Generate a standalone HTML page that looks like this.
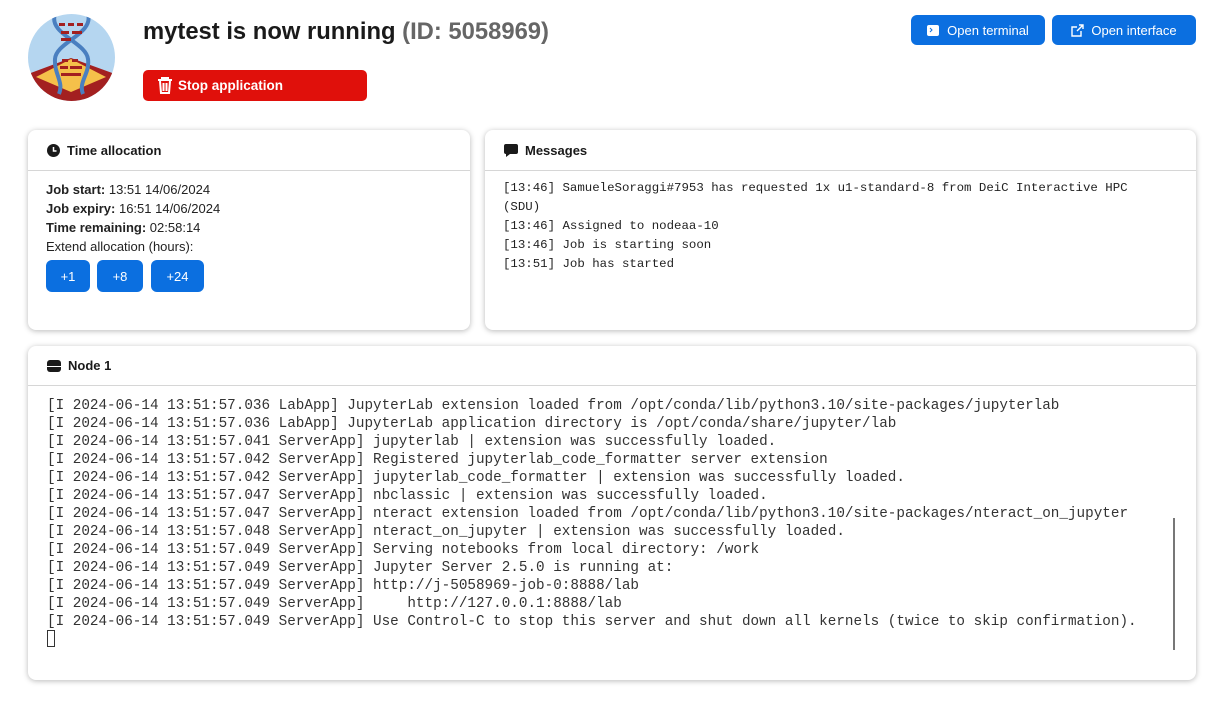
<!DOCTYPE html>
<html><head><meta charset="utf-8"><style>
*{box-sizing:border-box;margin:0;padding:0}
body{width:1221px;height:712px;background:#fff;font-family:"Liberation Sans",sans-serif;color:#222;position:relative;overflow:hidden}
.abs{position:absolute}
.card{position:absolute;background:#fff;border-radius:8px;box-shadow:0 1px 6px rgba(0,0,0,.28)}
.ch{height:41px;border-bottom:1px solid #d6d6d6;display:flex;align-items:center;padding-left:19px;font-weight:bold;font-size:13px;color:#1a1a1a}
.ch svg{margin-right:7px}
.btn{position:absolute;background:#0b6fe0;color:#fff;border-radius:6px;font-size:13px;display:flex;align-items:center;justify-content:center}
.mono{font-family:"Liberation Mono",monospace}
</style></head><body>
<svg class="abs" style="left:28px;top:14px" width="87" height="87" viewBox="0 0 87 87">
<defs><clipPath id="c"><circle cx="43.5" cy="43.5" r="43.5"/></clipPath></defs>
<g clip-path="url(#c)">
<rect width="87" height="87" fill="#b5d6f0"/>
<polygon points="0,60 43,44 87,60 87,87 0,87" fill="#a32020"/>
<polygon points="8,63 43,45 78,63 43,78" fill="#f5c04a"/>
<path d="M27,0 C20,20 58,28 60,45 C62,60 50,68 55,80" stroke="#4a7fc0" stroke-width="4" fill="none"/>
<path d="M60,0 C66,20 28,28 27,45 C26,60 36,68 31,80" stroke="#4a7fc0" stroke-width="4" fill="none"/>
<g fill="#a32020"><rect x="31" y="9" width="6" height="3"/><rect x="40" y="9" width="6" height="3"/><rect x="49" y="9" width="6" height="3"/>
<rect x="33" y="17" width="8" height="3"/><rect x="44" y="17" width="10" height="3"/><rect x="33" y="24" width="10" height="3"/>
<rect x="34" y="45" width="6" height="3"/><rect x="44" y="45" width="6" height="3"/><rect x="32" y="52" width="8" height="3"/><rect x="42" y="52" width="12" height="3"/><rect x="33" y="59" width="20" height="3"/></g>
</g></svg>
<div class="abs" style="left:143px;top:18px;font-size:23.8px;font-weight:bold;color:#1a1a1a">mytest is now running <span style="color:#666">(ID: 5058969)</span></div>
<div class="abs" style="left:143px;top:70px;width:224px;height:31px;background:#e0100b;border-radius:5px;color:#fff;font-weight:bold;font-size:13.5px;display:flex;align-items:center;padding-left:14px">
<svg width="16" height="17" viewBox="0 0 16 17" style="margin-right:5px"><path d="M1 3h14M5 3V1h6v2M3 4l1 12h8l1-12M6.5 6v8M9.5 6v8" stroke="#fff" stroke-width="2" fill="none"/></svg>Stop application</div>
<div class="btn" style="left:911px;top:15px;width:134px;height:30px"><svg width="12" height="11" style="margin-right:8px"><rect width="12" height="11" rx="2" fill="#fff"/><path d="M3 3l2 2-2 2" stroke="#0b6fe0" fill="none"/></svg>Open terminal</div>
<div class="btn" style="left:1052px;top:15px;width:144px;height:30px"><svg width="13" height="13" style="margin-right:7px" viewBox="0 0 13 13"><path d="M10 7v5H1V3h5M8 1h4v4M12 1L6 7" stroke="#fff" stroke-width="1.4" fill="none"/></svg>Open interface</div>

<div class="card" style="left:28px;top:130px;width:442px;height:200px">
<div class="ch"><svg width="13" height="13"><circle cx="6.5" cy="6.5" r="6.5" fill="#1a1a1a"/><path d="M6.5 3v4h3" stroke="#fff" stroke-width="1.5" fill="none"/></svg>Time allocation</div>
<div style="padding:9px 0 0 18px;font-size:13px;line-height:19px">
<div><b>Job start:</b> 13:51 14/06/2024</div><div><b>Job expiry:</b> 16:51 14/06/2024</div><div><b>Time remaining:</b> 02:58:14</div><div>Extend allocation (hours):</div></div>
<div class="btn" style="left:18px;top:130px;width:44px;height:32px">+1</div>
<div class="btn" style="left:69px;top:130px;width:46px;height:32px">+8</div>
<div class="btn" style="left:123px;top:130px;width:53px;height:32px">+24</div>
</div>

<div class="card" style="left:485px;top:130px;width:711px;height:200px">
<div class="ch"><svg width="14" height="13"><path d="M2 0h10a2 2 0 012 2v6a2 2 0 01-2 2H6l-4 3v-3a2 2 0 01-2-2V2a2 2 0 012-2z" fill="#1a1a1a"/></svg>Messages</div>
<div class="mono" style="padding:8px 0 0 18px;font-size:12.4px;line-height:19px;color:#222;width:680px">
[13:46] SamueleSoraggi#7953 has requested 1x u1-standard-8 from DeiC Interactive HPC (SDU)<br>[13:46] Assigned to nodeaa-10<br>[13:46] Job is starting soon<br>[13:51] Job has started</div>
</div>

<div class="card" style="left:28px;top:346px;width:1168px;height:334px;overflow:hidden">
<div class="ch" style="height:40px"><svg width="14" height="12"><rect y="0" width="14" height="12" rx="3" fill="#1a1a1a"/><rect y="6" width="14" height="1" fill="#fff"/></svg>Node 1</div>
<div class="mono" style="position:absolute;left:19px;top:51px;font-size:14.3px;line-height:18px;color:#333;white-space:pre">[I 2024-06-14 13:51:57.036 LabApp] JupyterLab extension loaded from /opt/conda/lib/python3.10/site-packages/jupyterlab
[I 2024-06-14 13:51:57.036 LabApp] JupyterLab application directory is /opt/conda/share/jupyter/lab
[I 2024-06-14 13:51:57.041 ServerApp] jupyterlab | extension was successfully loaded.
[I 2024-06-14 13:51:57.042 ServerApp] Registered jupyterlab_code_formatter server extension
[I 2024-06-14 13:51:57.042 ServerApp] jupyterlab_code_formatter | extension was successfully loaded.
[I 2024-06-14 13:51:57.047 ServerApp] nbclassic | extension was successfully loaded.
[I 2024-06-14 13:51:57.047 ServerApp] nteract extension loaded from /opt/conda/lib/python3.10/site-packages/nteract_on_jupyter
[I 2024-06-14 13:51:57.048 ServerApp] nteract_on_jupyter | extension was successfully loaded.
[I 2024-06-14 13:51:57.049 ServerApp] Serving notebooks from local directory: /work
[I 2024-06-14 13:51:57.049 ServerApp] Jupyter Server 2.5.0 is running at:
[I 2024-06-14 13:51:57.049 ServerApp] http://j-5058969-job-0:8888/lab
[I 2024-06-14 13:51:57.049 ServerApp]     http://127.0.0.1:8888/lab
[I 2024-06-14 13:51:57.049 ServerApp] Use Control-C to stop this server and shut down all kernels (twice to skip confirmation).</div>
<div style="position:absolute;left:19px;top:284px;width:8px;height:17px;border:1px solid #333"></div>
<div style="position:absolute;left:1145px;top:172px;width:2px;height:132px;background:#777"></div>
</div>
</body></html>
